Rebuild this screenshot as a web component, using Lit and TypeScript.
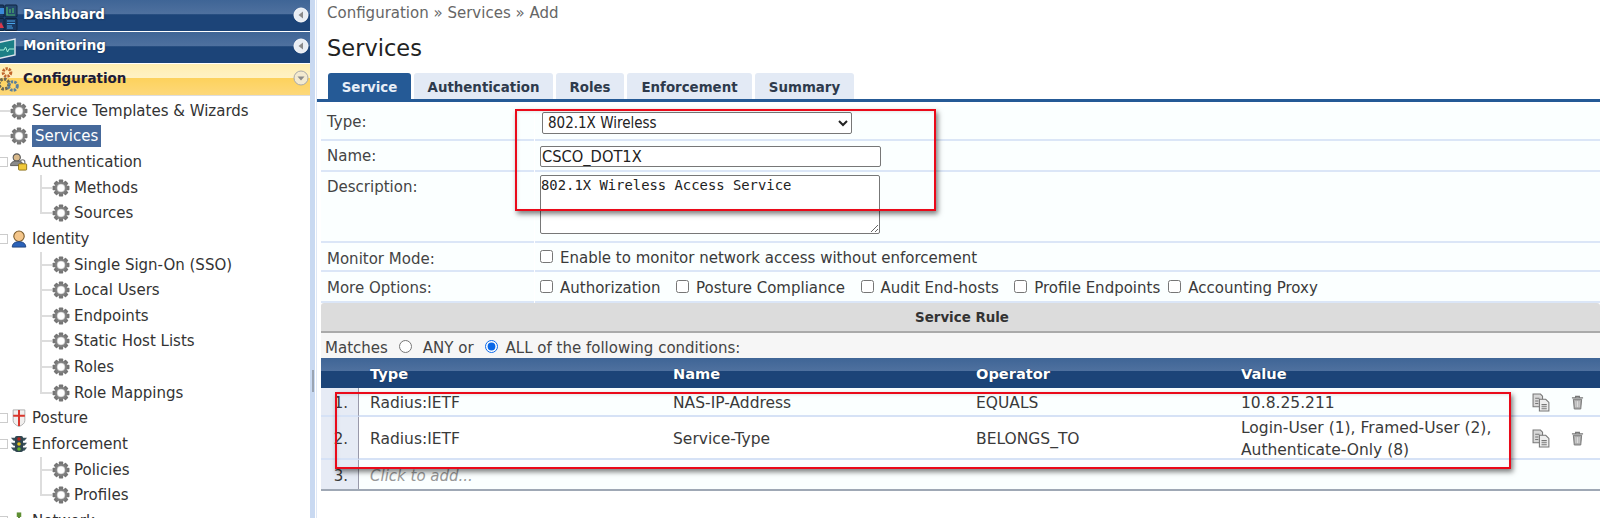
import { LitElement, html, css, svg } from "lit";
import { customElement } from "lit/decorators.js";

const gear = () => html`<svg class="gear" viewBox="0 0 20 20" aria-hidden="true">
  ${[0, 45, 90, 135].map((a) => svg`<rect x="7.6" y="0.6" width="4.8" height="18.8" rx="0.8" fill="#757575" transform="rotate(${a} 10 10)"/>`)}
  <circle cx="10" cy="10" r="6.9" fill="#808080"/>
  <circle cx="10" cy="10" r="4.4" fill="#fff"/>
  <circle cx="10" cy="10" r="4.4" fill="none" stroke="#bbb" stroke-width="0.6"/>
</svg>`;

const userLock = html`<svg class="ico" viewBox="0 0 20 20" aria-hidden="true">
  <circle cx="7.5" cy="5" r="4" fill="#d9b98a" stroke="#555" stroke-width="1.2"/>
  <path d="M0.5 14c0-3.500 3-5 7-5s6 1 7 3v2z" fill="#8a8a8a" stroke="#555"/>
  <rect x="9.500" y="12" width="9" height="7" rx="1" fill="#f1c93a" stroke="#8a6d10"/>
  <path d="M11.500 12V10a2.500 2.500 0 0 1 5 0v2" fill="none" stroke="#777" stroke-width="1.300"/>
</svg>`;
const identity = html`<svg class="ico" viewBox="0 0 20 20" aria-hidden="true">
  <circle cx="10" cy="7" r="5.800" fill="#f4c68b" stroke="#7a5a2a" stroke-width="1.200"/>
  <path d="M2.500 19c0-4 3-6 7.500-6s7.500 2 7.500 6z" fill="#2b62b8" stroke="#1d3f7a"/>
</svg>`;
const shield = html`<svg class="ico" viewBox="0 0 20 20" aria-hidden="true">
  <path d="M3.500 1h13v12c0 3-3 5-6.500 6.500C6.500 18 3.500 16 3.500 13z" fill="#f1efee" stroke="#aaa"/>
  <path d="M10 1v18M3.500 7.500h13" stroke="#d9362c" stroke-width="2.200"/>
</svg>`;
const traffic = html`<svg class="ico" viewBox="0 0 20 20" aria-hidden="true">
  <path d="M1 3h18l-3 3.500H4zM1 8.500h18l-3 3.500H4zM1 14h18l-3 3.500H4z" fill="#39505a"/>
  <rect x="5.500" y="1" width="9" height="18" rx="2" fill="#2f4650"/>
  <circle cx="10" cy="4.500" r="2" fill="#b3261e"/>
  <circle cx="10" cy="10" r="2" fill="#e3c21f"/>
  <circle cx="10" cy="15.500" r="2" fill="#66b32e"/>
</svg>`;
const netIcon = html`<svg class="ico" viewBox="0 0 20 20" aria-hidden="true">
  <path d="M10 3v9M3 12h14M3 12v5M17 12v5" stroke="#4f7a2a" stroke-width="2" fill="none"/>
  <rect x="7.500" y="0.500" width="5" height="5" fill="#5f8f33"/>
  <rect x="0.500" y="14" width="5" height="5" fill="#5f8f33"/>
  <rect x="14.500" y="14" width="5" height="5" fill="#5f8f33"/>
</svg>`;

const dashIcon = html`<svg class="head-ico" viewBox="0 0 22 28" aria-hidden="true">
  <rect x="-4" y="2" width="8" height="12" rx="1" fill="#1b3a63" stroke="#0e2440"/>
  <rect x="5" y="2" width="12" height="12" rx="1" fill="#24496f" stroke="#0e2440"/>
  <rect x="-4" y="15.500" width="8" height="12" rx="1" fill="#1b3a63" stroke="#0e2440"/>
  <rect x="5" y="15.500" width="12" height="12" rx="1" fill="#1b3a63" stroke="#0e2440"/>
  <path d="M-1 5h5v6H-1z" fill="#3a8ad8"/>
  <path d="M7 4v8h8M10 10V6M13 10V5" stroke="#4bb36a" stroke-width="1.200" fill="none"/>
  <path d="M-2 25l3-6 3 6z" fill="#d8384a"/>
  <path d="M7 18h8M7 20.500h8M7 23h5M7 25h6" stroke="#4aa4e8" stroke-width="1.200"/>
</svg>`;
const monIcon = html`<svg class="head-ico" viewBox="0 0 22 28" aria-hidden="true">
  <path d="M-3 9L15 5v16L-3 25z" fill="#1b7f86" stroke="#dfe6ee" stroke-width="1.400"/>
  <path d="M-2 16h6l1.500-3 2 5 1.500-3h5" stroke="#a5f0d8" stroke-width="1" fill="none"/>
</svg>`;
const cfgIcon = html`<svg class="head-ico" viewBox="0 0 22 28" aria-hidden="true">
  <circle cx="7" cy="6.500" r="3.800" fill="none" stroke="#c0662c" stroke-width="3" stroke-dasharray="2.200 1"/>
  <circle cx="4" cy="18" r="5" fill="none" stroke="#6e6a55" stroke-width="3.200" stroke-dasharray="2.600 1.200"/>
  <circle cx="13" cy="20" r="4.300" fill="none" stroke="#5b7f9c" stroke-width="3" stroke-dasharray="2.400 1.100"/>
</svg>`;

const chevron = (dir: string) => html`<svg class="chev" viewBox="0 0 16 16" aria-hidden="true">
  <circle cx="8" cy="8" r="7" fill="${dir === "down" ? "#f3ead0" : "#e8edf3"}" stroke="${dir === "down" ? "#aaa" : "#fff"}"/>
  <path d="${dir === "down" ? "M4.500 6.500h7L8 10.500z" : "M10 4.500v7L5.500 8z"}" fill="#8a8a8a"/>
</svg>`;

const copyIcon = html`<svg class="act" viewBox="0 0 18 18" aria-hidden="true">
  <path d="M1 1h7l2 2v10H1z" fill="#d8d8d8" stroke="#777"/>
  <path d="M7 6h6l3 3v8H7z" fill="#eee" stroke="#777"/>
  <path d="M3 5h4M3 7.500h3M3 10h3M9 11h5M9 13h5M9 15h5" stroke="#777" stroke-width="1"/>
</svg>`;
const trashIcon = html`<svg class="act trash" viewBox="0 0 14 16" aria-hidden="true">
  <path d="M1 3h12M5 3V1.500h4V3" stroke="#777" stroke-width="1.300" fill="none"/>
  <path d="M2.500 4.500h9L10.500 15h-7z" fill="#aaa" stroke="#777"/>
  <path d="M5.300 6.500v6.500M7 6.500v6.500M8.700 6.500v6.500" stroke="#eee" stroke-width="0.800"/>
</svg>`;

type Node = { label: string; icon?: unknown; expander?: boolean; sel?: boolean; kids?: string[] };
const tree: Node[] = [
  { label: "Service Templates & Wizards" },
  { label: "Services", sel: true },
  { label: "Authentication", icon: userLock, expander: true, kids: ["Methods", "Sources"] },
  { label: "Identity", icon: identity, expander: true, kids: ["Single Sign-On (SSO)", "Local Users", "Endpoints", "Static Host Lists", "Roles", "Role Mappings"] },
  { label: "Posture", icon: shield, expander: true },
  { label: "Enforcement", icon: traffic, expander: true, kids: ["Policies", "Profiles"] },
  { label: "Network", icon: netIcon, expander: true },
];

@customElement("app-root")
export class AppRoot extends LitElement {
  static styles = css`
    :host { display: flex; width: 1600px; height: 518px; overflow: hidden; background: #fff; position: relative;
      font-family: "DejaVu Sans", sans-serif; font-size: 15px; color: #333; }
    .side { width: 310px; flex: none; display: flex; flex-direction: column; overflow: hidden; }
    .band { width: 5px; flex: none; background: #c9d9f1; display: flex; flex-direction: column; justify-content: flex-start; align-items: center; padding-top: 370px; box-sizing: border-box; margin-right: 1px; }
    .grip { width: 2px; height: 22px; background: #9aa4b2; }
    .head { height: 31px; margin-bottom: 1px; flex: none; display: flex; align-items: center; color: #fff; font-weight: 700; font-size: 13.450px; box-sizing: border-box; padding-bottom: 4px;
      background: linear-gradient(#3f6596 0, #4f719f 46%, #1c4478 47%, #1c4478 100%); text-shadow: 0 0 2px #0c2340; padding-right: 1px; }
    .head.top { padding-bottom: 2px; }
    .head.on { height: 32px; margin-bottom: 0; padding-bottom: 3px; color: #1c1c38; text-shadow: none; background: linear-gradient(#ffeeb0 0, #fff2c4 44%, #fdd25c 45%, #fdd87a 100%); border-bottom: 1px solid #ddd; }
    .head-ico { width: 22px; height: 28px; flex: none; overflow: visible; margin-top: 4px; }
    .head-label { flex: 1; margin-left: 1px; }
    .chev { width: 16px; height: 16px; flex: none; }
    .tree { flex: 1; display: grid; grid-auto-rows: 25.630px; padding-top: 2px; align-content: start; }
    .row { display: flex; align-items: center; min-width: 0; white-space: nowrap; }
    .stub { width: 10px; align-self: stretch; flex: none; background: linear-gradient(#ddd, #ddd) left center / 100% 2px no-repeat; }
    .exp { width: 8px; height: 10px; flex: none; border: 1px solid #ccc; border-left: 0; box-sizing: border-box; margin-right: 2px; }
    .gear { width: 18px; height: 18px; flex: none; }
    .ico { width: 18px; height: 18px; flex: none; }
    .text { margin-left: 4px; padding: 1px 3px 1px 0; }
    .sel { background: #46699b; color: #fff; padding: 2px 3px; margin-left: 4px; }
    .elbow { margin-left: 40px; width: 12px; align-self: stretch; flex: none;
      background: linear-gradient(#ddd, #ddd) left top / 2px 100% no-repeat, linear-gradient(#ddd, #ddd) left center / 100% 2px no-repeat; }
    .elbow.last { background: linear-gradient(#ddd, #ddd) left top / 2px 50% no-repeat, linear-gradient(#ddd, #ddd) left center / 100% 2px no-repeat; }

    .main { flex: 1; min-width: 0; display: flex; flex-direction: column; border-left: 1px solid #dfe8f6; }
    .crumb { color: #666; height: 26px; line-height: 26px; padding-left: 10px; font-size: 15px; }
    h1 { margin: 0; height: 47px; line-height: 44px; font-size: 22.500px; font-weight: 400; color: #222; padding-left: 10px; box-sizing: border-box; }
    .tabs { display: flex; gap: 3px; height: 26px; padding-left: 11px; border-bottom: 3px solid #255a96; font-weight: 700; font-size: 13.360px; color: #2e3a4c; flex: none; }
    .tab { background: #e3eaf5; border-radius: 3px 3px 0 0; display: flex; align-items: center; justify-content: center; padding-top: 3px; box-sizing: border-box; }
    .tab.on { background: #255a96; color: #e8eef7; }
    .form { margin: 4px 0 0 4px; display: grid; grid-template-columns: 213px 1fr; grid-template-rows: 35px 31px 71px 29px 31px; column-gap: 1px; }
    .form > div { background: #fbffff; border-bottom: 2px solid #dbe6f7; box-sizing: border-box; display: flex; }
    .l { padding: 6px 0 0 6px; color: #444; }
    .l.first { padding-top: 7px; }
    .v { align-items: center; padding-left: 5px; gap: 6px; color: #3a3a3a; }
    .v.top { align-items: flex-start; padding-top: 3px; }
    .v.named, .v.low { padding-top: 2px; }
    select, input[type="text"] { font-family: "DejaVu Sans Condensed", "DejaVu Sans", sans-serif; font-stretch: condensed; font-size: 15px; color: #222; background: #fff; border: 1px solid #777; border-radius: 2px; }
    select { width: 310px; height: 22px; margin-left: 2px; padding: 0 0 0 1px; }
    input[type="text"] { width: 341px; height: 21px; box-sizing: border-box; padding: 0 1px; margin: 0; font-size: 16.300px; }
    textarea { width: 340px; height: 59px; box-sizing: border-box; font-family: "DejaVu Sans Mono", monospace; font-size: 13.870px; color: #222; border: 1px solid #777; border-radius: 2px; padding: 1px 0 0 0; margin: 0; resize: both; background: #fff; }
    input[type="checkbox"], input[type="radio"] { width: 13px; height: 13px; margin: 0; flex: none; }
    input[type="checkbox"] { margin-bottom: 2px; }
    .chk { display: flex; align-items: center; gap: 7px; margin-right: 15.500px; }
    .opt-tight { margin-right: 8px; }
    .rule { margin-left: 4px; height: 30px; background: #dcdcdc; border-bottom: 2px solid #aaa; box-sizing: border-box; display: flex; align-items: center; justify-content: center; font-weight: 700; font-size: 13.400px; color: #333; padding-left: 3px; border-radius: 3px 3px 0 0; }
    .matches { margin-left: 4px; height: 25px; background: #f6f6f6; display: flex; align-items: center; padding: 4px 0 0 4px; box-sizing: border-box; color: #444; gap: 6px; }
    .matches input { margin: 0 5px 3px; accent-color: #0a68e8; }
    .matches input.second { margin-right: 2px; }
    .tbl { margin-left: 4px; display: grid; grid-template-columns: 38px 303px 303px 265px 290px 1fr; border-bottom: 2px solid #9fa8b5; }
    .th { height: 30px; display: flex; align-items: center; padding-left: 11px; color: #fff; font-weight: 700; font-size: 14.600px; text-shadow: 0 0 1px #0c2340;
      background: linear-gradient(#3f6596 0, #4f719f 44%, #1c4478 45%, #1c4478 100%); box-sizing: border-box; }
    .td { display: flex; align-items: center; padding: 2px 0 0 11px; border-bottom: 2px solid #d6e2f6; box-sizing: border-box; color: #3a3a3a; line-height: 22px; font-size: 15.500px; }
    .a { background: #fbffff; }
    .b { background: #fff; }
    .num { background: #e6ebf5; border-right: 1.500px solid #99a; padding: 2px 10px 0 0; justify-content: flex-end; border-bottom: 2px solid #d6e2f6; font-size: 15px; }
    .r1 { height: 29px; } .r2 { height: 43px; } .r3 { height: 29px; border-bottom: 0; }
    .hint { color: #999; font-style: italic; font-size: 15px; }
    .actions { gap: 20px; padding-left: 12px; }
    .act { width: 19px; height: 19px; flex: none; }
    .act.trash { width: 13px; height: 15px; }
    .flag { position: absolute; border: 2px solid #ea0a1a; box-shadow: 2px 3px 5px rgba(0, 0, 0, 0.5), inset 1px 1px 3px rgba(0, 0, 0, 0.1); box-sizing: border-box; pointer-events: none; }
    .f1 { left: 515px; top: 109px; width: 421px; height: 102px; }
    .f2 { left: 335px; top: 392px; width: 1176px; height: 77px; }
  `;

  render() {
    return html`
      <div class="side">
        <div class="head top">${dashIcon}<span class="head-label">Dashboard</span>${chevron("left")}</div>
        <div class="head">${monIcon}<span class="head-label">Monitoring</span>${chevron("left")}</div>
        <div class="head on">${cfgIcon}<span class="head-label">Configuration</span>${chevron("down")}</div>
        <div class="tree">
          ${tree.map((n) => html`
            <div class="row">
              ${n.expander ? html`<span class="exp"></span>` : html`<span class="stub"></span>`}
              ${n.icon ?? gear()}
              <span class="${n.sel ? "sel" : "text"}">${n.label}</span>
            </div>
            ${(n.kids ?? []).map((k, i, all) => html`
              <div class="row">
                <span class="elbow ${i === all.length - 1 ? "last" : ""}"></span>
                ${gear()}
                <span class="text">${k}</span>
              </div>`)}
          `)}
        </div>
      </div>
      <div class="band"><span class="grip"></span></div>
      <div class="main">
        <div class="crumb">Configuration » Services » Add</div>
        <h1>Services</h1>
        <div class="tabs">
          <div class="tab on" style="width:83px">Service</div>
          <div class="tab" style="width:139px">Authentication</div>
          <div class="tab" style="width:68px">Roles</div>
          <div class="tab" style="width:125px">Enforcement</div>
          <div class="tab" style="width:99px">Summary</div>
        </div>
        <div class="form">
          <div class="l first">Type:</div>
          <div class="v"><select><option>802.1X Wireless</option></select></div>
          <div class="l">Name:</div>
          <div class="v named"><input type="text" value="CSCO_DOT1X" /></div>
          <div class="l">Description:</div>
          <div class="v top"><textarea>802.1X Wireless Access Service</textarea></div>
          <div class="l first">Monitor Mode:</div>
          <div class="v low"><label class="chk"><input type="checkbox" />Enable to monitor network access without enforcement</label></div>
          <div class="l first">More Options:</div>
          <div class="v low" style="gap:0">
            <label class="chk"><input type="checkbox" />Authorization</label>
            <label class="chk"><input type="checkbox" />Posture Compliance</label>
            <label class="chk"><input type="checkbox" />Audit End-hosts</label>
            <label class="chk opt-tight"><input type="checkbox" />Profile Endpoints</label>
            <label class="chk"><input type="checkbox" />Accounting Proxy</label>
          </div>
        </div>
        <div class="rule">Service Rule</div>
        <div class="matches">Matches <input type="radio" name="m" /> ANY or <input class="second" type="radio" name="m" checked /> ALL of the following conditions:</div>
        <div class="tbl">
          <div class="th"></div><div class="th">Type</div><div class="th">Name</div><div class="th">Operator</div><div class="th">Value</div><div class="th"></div>
          <div class="td num r1">1.</div><div class="td a r1">Radius:IETF</div><div class="td a r1">NAS-IP-Address</div><div class="td a r1">EQUALS</div><div class="td a r1">10.8.25.211</div><div class="td a r1 actions">${copyIcon}${trashIcon}</div>
          <div class="td num r2">2.</div><div class="td b r2">Radius:IETF</div><div class="td b r2">Service-Type</div><div class="td b r2">BELONGS_TO</div><div class="td b r2"><span>Login-User (1), Framed-User (2),<br />Authenticate-Only (8)</span></div><div class="td b r2 actions">${copyIcon}${trashIcon}</div>
          <div class="td num r3">3.</div><div class="td a r3 hint">Click to add...</div><div class="td a r3"></div><div class="td a r3"></div><div class="td a r3"></div><div class="td a r3"></div>
        </div>
      </div>
      <div class="flag f1"></div>
      <div class="flag f2"></div>
    `;
  }
}
